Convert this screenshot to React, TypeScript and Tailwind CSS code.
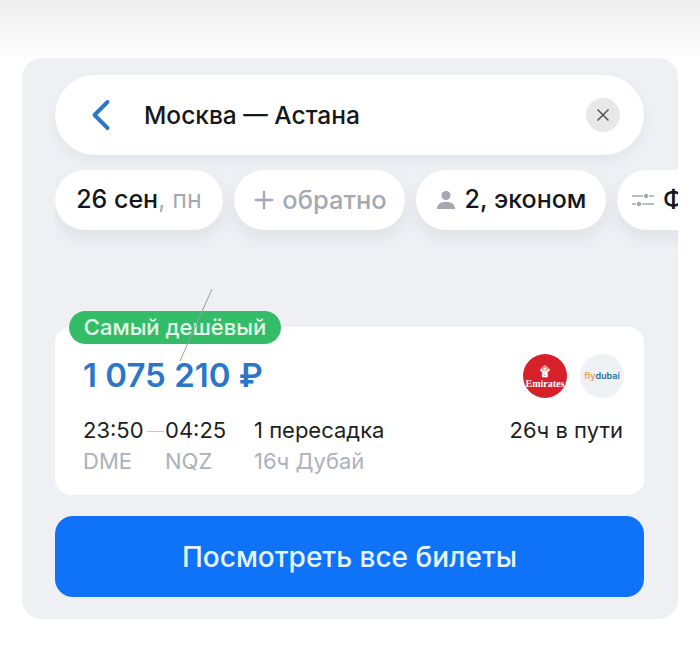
import { ChevronLeft, Plus, X } from 'lucide-react';

function Chip({ className, children }: { className: string; children: React.ReactNode }) {
  return (
    <div className={`flex h-[60px] shrink-0 items-center rounded-[30px] bg-white shadow-[0_8px_16px_rgba(90,100,120,0.10)] ${className}`}>
      {children}
    </div>
  );
}

export default function App() {
  return (
    <div className="h-[647px] w-[700px] overflow-hidden bg-[linear-gradient(#eeeeee_0,#f6f6f6_30px,#ffffff_62px)] px-[22px] pt-[58px] font-['Inter',sans-serif]">
      <div className="relative h-[561px] overflow-hidden rounded-[20px] bg-[#eef0f4] pl-[33px] pr-[34px] pt-[17px]">
        <div className="flex h-[80px] items-center rounded-[40px] bg-white pl-[20px] pr-[24px] shadow-[0_6px_14px_rgba(90,100,120,0.08)]">
          <ChevronLeft className="h-[52px] w-[52px] text-[#2a76c8]" strokeWidth={1.8} />
          <span className="ml-[17px] flex-1 text-[24.5px] font-medium text-[#15171a]">Москва — Астана</span>
          <div className="flex h-[34px] w-[34px] items-center justify-center rounded-full bg-[#e8e8e8]">
            <X className="h-[20px] w-[20px] text-[#55585c]" strokeWidth={2} />
          </div>
        </div>

        <div className="mr-[-34px] mt-[15px] flex gap-[11px] overflow-hidden pb-[24px]">
          <Chip className="w-[168px] justify-center">
            <span className="text-[25px] font-medium text-[#15171a]">26 сен</span>
            <span className="text-[25px] text-[#a4a9b1]">, пн</span>
          </Chip>
          <Chip className="w-[171px] justify-center gap-[4px] pr-[2px]">
            <Plus className="h-[28px] w-[28px] text-[#a4a9b1]" strokeWidth={2} />
            <span className="text-[25.5px] font-medium text-[#a4a9b1]">обратно</span>
          </Chip>
          <Chip className="w-[190px] justify-center gap-[9px]">
            <svg viewBox="0 0 22 22" className="h-[20px] w-[20px] shrink-0 text-[#a4a9b1]" fill="currentColor">
              <circle cx="11" cy="6" r="5" />
              <path d="M1 21c0-5 4-8 10-8s10 3 10 8z" />
            </svg>
            <span className="text-[25px] font-medium text-[#15171a]">2, эконом</span>
          </Chip>
          <Chip className="w-[120px] pl-[15px]">
            <svg viewBox="0 0 22 14" className="h-[14px] w-[22px] shrink-0 text-[#a4a9b1]" fill="none" stroke="currentColor" strokeWidth="1.5">
              <path d="M0 3h11M17 3h5M0 11h4M10 11h12" />
              <circle cx="14" cy="3" r="1.5" fill="currentColor" />
              <circle cx="7" cy="11" r="1.5" fill="currentColor" />
            </svg>
            <span className="ml-[9px] whitespace-nowrap text-[25px] font-medium text-[#15171a]">Фильтры</span>
          </Chip>
        </div>

        <div className="relative mt-[73px] h-[168px] rounded-[16px] bg-white">
          <div className="absolute left-[14px] top-[-16px] flex h-[33px] w-[212px] items-center justify-center rounded-[17px] bg-[#33bd69] text-[22px] font-medium text-[#e4f7ea]">
            Самый дешёвый
          </div>
          <div className="flex items-start justify-between pl-[28px] pr-[20px] pt-[27px]">
            <span className="text-[33px] font-semibold leading-[42px] text-[#2a76c8]">1 075 210 ₽</span>
            <div className="flex gap-[13px]">
              <div className="flex h-[44px] w-[44px] flex-col items-center justify-end rounded-full bg-[#d8202a] pb-[9px] font-['Liberation_Serif',serif] text-[10px] font-bold leading-none text-white">
                <span className="mb-[1px] text-[13px] leading-none">۩</span>
                <span>Emirates</span>
              </div>
              <div className="flex h-[44px] w-[44px] items-center justify-center rounded-full bg-[#f0f1f5] text-[9px] font-semibold">
                <span className="text-[#e0a060]">fly</span>
                <span className="text-[#2f6f9f]">dubai</span>
              </div>
            </div>
          </div>
          <div className="mt-[17px] flex pl-[28px] pr-[21px] text-[22px] leading-[31px]">
            <div className="w-[82px] text-[#1d1f22]">
              <div>23:50</div>
              <div className="text-[#adb1b8]">DME</div>
            </div>
            <div className="w-[89px] text-[#1d1f22]">
              <div>04:25</div>
              <div className="text-[#adb1b8]">NQZ</div>
            </div>
            <div className="flex-1 text-[#1d1f22]">
              <div>1 пересадка</div>
              <div className="text-[#adb1b8]">16ч Дубай</div>
            </div>
            <div className="text-[#1d1f22]">26ч в пути</div>
          </div>
          <div className="absolute left-[92px] top-[104px] h-[1px] w-[17px] bg-[#c4c7cc]" />
        </div>

        <button className="mt-[21px] flex h-[81px] w-full items-center justify-center rounded-[18px] bg-[#0f73fa] pt-[1px] text-[28px] font-medium text-[#e6f4ff]">
          Посмотреть все билеты
        </button>

        {/* царапина на скриншоте */}
        <svg className="absolute left-[155px] top-[230px]" width="40" height="75" fill="none" stroke="#9a9ea3" strokeWidth="1">
          <path d="M35 1 3 73" />
        </svg>
      </div>
    </div>
  );
}
